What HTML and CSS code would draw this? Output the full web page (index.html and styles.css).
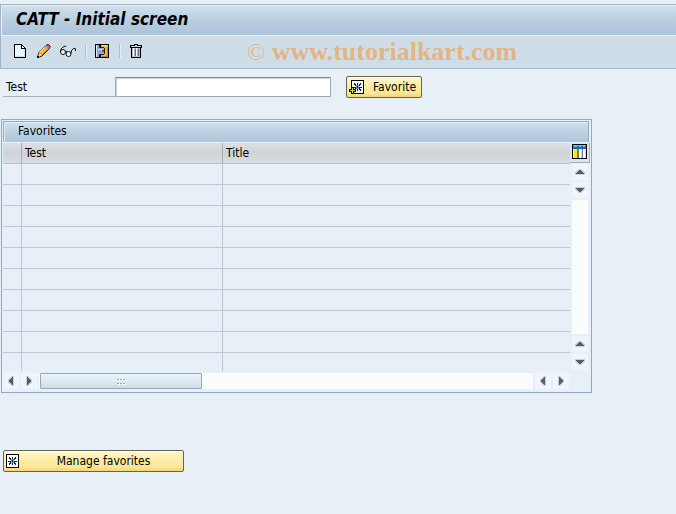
FILE: index.html
```html
<!DOCTYPE html>
<html lang="en">
<head>
<meta charset="utf-8">
<title>CATT - Initial screen</title>
<link rel="stylesheet" href="styles.css">
</head>
<body>
<svg class="defs" aria-hidden="true">
  <symbol id="up" viewBox="0 0 10 6"><path d="M3 0h4v1h1v1h1v1h1v3H0V3h1V2h1V1h1z" fill="#c5d0d9"/><path d="M4 1h2v1h1v1h1v1h1v1H1V4h1V3h1V2h1z" fill="#4c606e"/></symbol>
  <symbol id="star" viewBox="0 0 13 14"><path d="M0 0h13v14H0z" fill="#000"/><path d="M1 1h11v12H1z" fill="#f4f6fa"/><path d="M2 7h9M6.500 3v8M3 3.500l7 7M10 3.500l-7 7" stroke="#123" stroke-width="1"/><path d="M5 5h3v4H5z" fill="#6f8fd0"/><path d="M6 6h1v2H6z" fill="#124"/></symbol>
</svg>
<header class="head">
  <h1 class="title">CATT - Initial screen</h1>
  <div class="toolbar">
    <button class="tool" aria-label="Create"><svg width="16" height="16" shape-rendering="crispEdges"><path d="M3 1h8v1h1v1h1v1h1v1h1v10H3z" fill="#000"/><path d="M4 2h6v4h4v8H4z" fill="#eaf5fd"/><path d="M11 3h1v1h1v1h-2z" fill="#fff"/><path d="M13 6h1v8H4v-1h9z" fill="#cfe0ec"/></svg></button>
    <button class="tool" aria-label="Change"><svg width="16" height="16"><path d="M2.500 14.500l1.500-5 7-7 1.500-1h1l1.500 1.500v1.500l-1 1.500-7 7z" fill="#f8b531" stroke="#111"/><path d="M4.500 9.500l6-6" stroke="#fff08a"/><path d="M6.500 12.500l6.500-6.500" stroke="#e07a10"/><path d="M10 3.500l3 3" stroke="#8fa9d8" stroke-width="2"/><path d="M12 2h1.500l1 1v2l-.500.500-2.500-2.500z" fill="#e24b4b"/><path d="M4 10l2.500 2.500-3 1.500z" fill="#f7dfc0"/><path d="M2 13h2v2H2z" fill="#000"/></svg></button>
    <button class="tool" aria-label="Display"><svg width="18" height="16"><g fill="none" stroke="#111"><circle cx="4" cy="9" r="2.500" fill="#edf5fa"/><circle cx="9.500" cy="11" r="2.500" fill="#edf5fa"/><path d="M6 8.500q1.500-.500 2 .500M1.500 8.500q0-3 2.500-4.500t3-.500M12 10.500q0-4 2.500-5t2 1.500v1"/></g></svg></button>
    <span class="sep"></span>
    <button class="tool" aria-label="Record"><svg width="16" height="16" shape-rendering="crispEdges"><path d="M0 1h14v14H0z" fill="#000"/><path d="M6 2h7v12H6z" fill="#f2b632"/><path d="M7 2h6v1H7z" fill="#ffe79a"/><path d="M1 2h3v3h2v1h3v4H6v1H4v3H1z" fill="#8ea8d6"/><path d="M1 2h1v12H1zM3 6h4v1H3z" fill="#dce8fb"/><path d="M4 2h1v3H4zM4 11h1v3H4zM5 4h4v1h1v6H9v1H5v-1h4V5H5z" fill="#222"/><path d="M7 7h2v2H7z" fill="#465f97"/><path d="M12 4h1v10H7v-1h5z" fill="#c78213"/></svg></button>
    <span class="sep"></span>
    <button class="tool" aria-label="Delete"><svg width="16" height="16" shape-rendering="crispEdges"><path d="M5 1h4v1h4v3h-1v10H2V5H1V2h4z" fill="#000"/><path d="M6 2h2v1H6zM2 3h10v1H2z" fill="#d5dbe4"/><path d="M3 5h8v9H3z" fill="#b5bccb"/><path d="M4 5h1v8H4zM7 5h1v8H7z" fill="#fff"/><path d="M6 6h1v7H6zM9 6h1v7H9z" fill="#626b82"/></svg></button>
    <span class="mark"><span class="copy">©</span> www.tutorialkart.com</span>
  </div>
</header>
<main>
  <form class="entry">
    <label for="test">Test</label>
    <input id="test" type="text">
    <button class="btn" type="button"><svg class="fav" width="16" height="15" shape-rendering="crispEdges"><use href="#star" x="2" y="0" width="13" height="14"/><path d="M2 7h3v2h2v3H5v2H2v-2H0V9h2z" fill="#000"/><path d="M3 8h1v2h2v1H4v2H3v-2H1v-1h2z" fill="#c8df32"/></svg>Favorite</button>
  </form>
  <section class="panel">
    <h2>Favorites</h2>
    <div class="grid">
      <table>
        <colgroup><col class="pick"><col class="name"><col></colgroup>
        <thead><tr><th></th><th>Test</th><th>Title</th></tr></thead>
        <tbody>
          <tr><td></td><td></td><td></td></tr><tr><td></td><td></td><td></td></tr>
          <tr><td></td><td></td><td></td></tr><tr><td></td><td></td><td></td></tr>
          <tr><td></td><td></td><td></td></tr><tr><td></td><td></td><td></td></tr>
          <tr><td></td><td></td><td></td></tr><tr><td></td><td></td><td></td></tr>
          <tr><td></td><td></td><td></td></tr><tr><td></td><td></td><td></td></tr>
        </tbody>
      </table>
      <div class="side">
        <button class="config" aria-label="Table settings"><svg width="15" height="15" shape-rendering="crispEdges"><path d="M0 0h15v15H0z" fill="#000"/><path d="M1 1h13v13H1z" fill="#667b88"/><path d="M1 1h13v4H1z" fill="#146bb5"/><path d="M1 1h13v1H1zM2 2h3v1H2zM7 2h2v1H7zM11 2h2v1h-2z" fill="#75bdec"/><path d="M1 5h4v9H1z" fill="#ffeb00"/><path d="M1 5h1v9H1z" fill="#fff99b"/><path d="M7 5h2v9H7zM11 5h2v9h-2z" fill="#fff"/><path d="M9 5h1v9H9zM13 5h1v9h-1z" fill="#d5d9dc"/></svg></button>
        <div class="vbar">
          <button class="arrow" aria-label="Up"><svg width="10" height="6" shape-rendering="crispEdges"><use href="#up"/></svg></button>
          <button class="arrow down" aria-label="Down"><svg width="10" height="6" shape-rendering="crispEdges"><use href="#up"/></svg></button>
          <span class="track"></span>
          <button class="arrow" aria-label="Page up"><svg width="10" height="6" shape-rendering="crispEdges"><use href="#up"/></svg></button>
          <button class="arrow down" aria-label="Page down"><svg width="10" height="6" shape-rendering="crispEdges"><use href="#up"/></svg></button>
        </div>
      </div>
    </div>
    <div class="hbar">
      <button class="arrow left" aria-label="Left"><svg width="10" height="6" shape-rendering="crispEdges"><use href="#up"/></svg></button>
      <button class="arrow right" aria-label="Right"><svg width="10" height="6" shape-rendering="crispEdges"><use href="#up"/></svg></button>
      <span class="track"><span class="thumb"><svg width="9" height="7" shape-rendering="crispEdges"><path d="M1 1h2v2H1zM4 1h2v2H4zM7 1h2v2H7zM1 5h2v2H1zM4 5h2v2H4zM7 5h2v2H7z" fill="#fff"/><path d="M0 1h2v1H0zM3 1h2v1H3zM6 1h2v1H6zM0 5h2v1H0zM3 5h2v1H3zM6 5h2v1H6z" fill="#96a9b7"/></svg></span></span>
      <button class="arrow left" aria-label="Page left"><svg width="10" height="6" shape-rendering="crispEdges"><use href="#up"/></svg></button>
      <button class="arrow right" aria-label="Page right"><svg width="10" height="6" shape-rendering="crispEdges"><use href="#up"/></svg></button>
    </div>
  </section>
  <button class="btn manage"><svg width="13" height="14" shape-rendering="crispEdges"><use href="#star"/></svg><span>Manage favorites</span></button>
</main>
</body>
</html>
```
FILE: styles.css
```css
* { box-sizing: border-box; }
body {
  margin: 0;
  padding-top: 4px;
  background: #e8f0f7;
  color: #000;
  font: 12px/16px Tahoma, "DejaVu Sans Condensed", sans-serif;
}
button, input { font: inherit; color: inherit; }
button { margin: 0; padding: 0; border: 0; background: none; }
svg { display: block; flex: none; }
.defs { position: absolute; width: 0; height: 0; }

.head { border: 1px solid #a3b5cb; border-right: 0; background: #cfdde8; }
.title {
  margin: 0;
  height: 30px;
  padding: 3px 14px;
  border-top: 1px solid #e6eff6;
  border-left: 1px solid #e6eff6;
  background: linear-gradient(#d0e0ec, #b9cfdf 50%, #abc3dc);
  font: italic bold 17px/20px Tahoma, "DejaVu Sans Condensed", sans-serif;
}
.toolbar {
  display: flex;
  align-items: center;
  height: 33px;
  padding: 0 10px 3px;
  gap: 8px;
  border-top: 1px solid #edf4f9;
}
.tool { flex: none; }
.sep { width: 2px; height: 14px; background: #a6c0d9; border-right: 1px solid #e4eff8; }
.mark {
  margin-left: 94px;
  padding-top: 2px;
  color: #e3b584;
  font: bold 26px/28px "Liberation Serif", serif;
  white-space: nowrap;
}
.copy { font-weight: normal; font-size: 24px; }

.entry { display: flex; align-items: center; padding: 7px 3px 0; }
.entry label { width: 112px; height: 20px; padding: 2px 3px; border-bottom: 1px solid #adb2b8; }
.entry input {
  width: 216px;
  height: 20px;
  margin-right: 15px;
  border: 1px solid #a3a8ad;
  border-top: 1px solid #888d92;
  box-shadow: inset 1px 1px 1px #ccc;
  background: #fff;
}
.btn {
  display: flex;
  align-items: center;
  width: 76px;
  height: 22px;
  padding: 0 2px;
  gap: 8px;
  border: 1px solid #66645a;
  border-radius: 2px;
  background: linear-gradient(#fff7ce, #ffeca0 50%, #fce797 80%, #f1d474);
  box-shadow: inset 0 1px #fffbe5;
}
.manage { width: 181px; margin: 57px 3px 0; padding-right: 15px; }
.manage span { flex: 1; padding-left: 12px; text-align: center; }

.panel {
  width: calc(100% - 1px);
  max-width: 591px;
  margin: 21px 0 0 1px;
  padding: 1px;
  border: 1px solid #8eaac4;
}
.panel h2 {
  height: 21px;
  margin: 0 1px 1px 0;
  padding: 1px 14px;
  border: 1px solid #94abc3;
  border-bottom: 0;
  box-shadow: inset 1px 1px #e0ebf4;
  background: linear-gradient(#d1e1ed, #bcd1e0 50%, #adc5de);
  font: 12px/16px Tahoma, "DejaVu Sans Condensed", sans-serif;
}
.grid { display: flex; }
table { flex: 1; table-layout: fixed; border-collapse: separate; border-spacing: 0; }
.pick { width: 19px; }
.name { width: 201px; }
th {
  height: 21px;
  padding: 0 3px;
  border-right: 1px solid #a6aeb8;
  border-bottom: 1px solid #bac0c6;
  background: linear-gradient(#dde0e3, #ced3d7 50%, #d9dde0);
  text-align: left;
  font-weight: normal;
}
td { height: 21px; padding: 0; border-right: 1px solid #bec7d8; border-bottom: 1px solid #bec7d8; }
th:last-child, td:last-child { border-right: 0; }
tr:last-child td { height: 18px; border-bottom: 0; }
.side { display: flex; flex-direction: column; width: 20px; }
.config {
  height: 20px;
  padding: 1px 2px 3px;
  border-right: 1px solid #a6aeb8;
  border-bottom: 1px solid #a6aeb8;
  background: #dfe3e7;
}
.vbar { display: flex; flex: 1; flex-direction: column; gap: 2px; padding: 1px 2px 1px; }
.arrow {
  display: flex;
  flex: none;
  align-items: center;
  justify-content: center;
  width: 16px;
  height: 16px;
  background: #f1f5fb;
}
.down svg { transform: rotate(180deg); }
.left svg { transform: rotate(-90deg); }
.right svg { transform: rotate(90deg); }
.track { flex: 1; background: #fbfcfd; }
.hbar { display: flex; gap: 2px; margin: 2px 21px 2px 0; }
.thumb {
  display: flex;
  align-items: center;
  justify-content: center;
  width: 162px;
  height: 16px;
  margin-left: 1px;
  border: 1px solid #94a9b9;
  border-radius: 1px;
  background: linear-gradient(#edf4f9, #e0eaf2 50%, #ccdce8);
}
```
